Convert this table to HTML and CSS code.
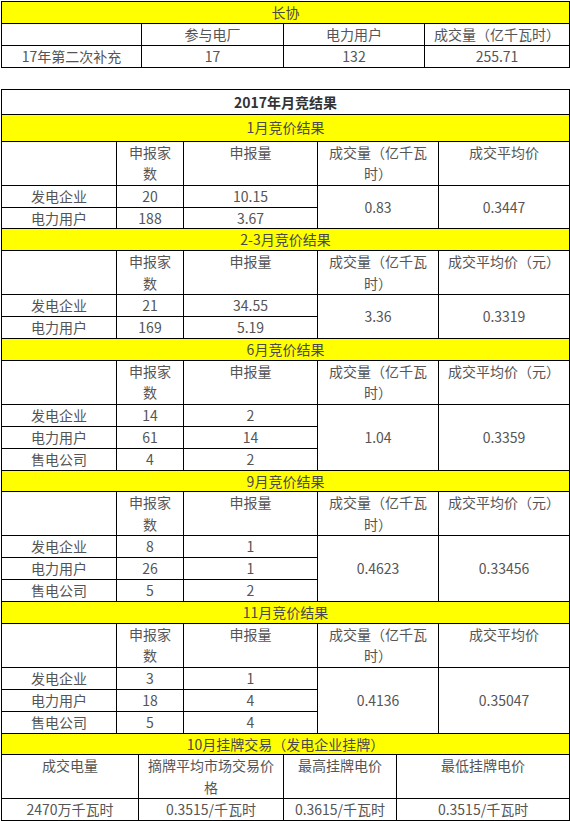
FILE: index.html
```html
<!DOCTYPE html>
<html lang="zh-CN">
<head>
<meta charset="utf-8">
<title>长协与月竞结果</title>
<link rel="stylesheet" href="styles.css">
</head>
<body>
<div class="page">
  <table class="grid t1">
    <colgroup><col class="c1a"><col class="c1b"><col class="c1c"><col class="c1d"></colgroup>
    <tr class="yl"><td colspan="4">长协</td></tr>
    <tr><td></td><td>参与电厂</td><td>电力用户</td><td>成交量（亿千瓦时）</td></tr>
    <tr><td>17年第二次补充</td><td>17</td><td>132</td><td>255.71</td></tr>
  </table>

  <table class="grid t2">
    <colgroup><col class="c2a"><col class="c2b"><col class="c2c"><col class="c2d"><col class="c2e"></colgroup>
    <tr class="title"><td colspan="5">2017年月竞结果</td></tr>

    <tr class="yl first"><td colspan="5">1月竞价结果</td></tr>
    <tr class="hd"><td></td><td>申报家数</td><td>申报量</td><td>成交量（亿千瓦时）</td><td>成交平均价</td></tr>
    <tr><td>发电企业</td><td>20</td><td>10.15</td><td rowspan="2">0.83</td><td rowspan="2">0.3447</td></tr>
    <tr><td>电力用户</td><td>188</td><td>3.67</td></tr>

    <tr class="yl"><td colspan="5">2-3月竞价结果</td></tr>
    <tr class="hd"><td></td><td>申报家数</td><td>申报量</td><td>成交量（亿千瓦时）</td><td>成交平均价（元）</td></tr>
    <tr><td>发电企业</td><td>21</td><td>34.55</td><td rowspan="2">3.36</td><td rowspan="2">0.3319</td></tr>
    <tr><td>电力用户</td><td>169</td><td>5.19</td></tr>

    <tr class="yl"><td colspan="5">6月竞价结果</td></tr>
    <tr class="hd"><td></td><td>申报家数</td><td>申报量</td><td>成交量（亿千瓦时）</td><td>成交平均价（元）</td></tr>
    <tr><td>发电企业</td><td>14</td><td>2</td><td rowspan="3">1.04</td><td rowspan="3">0.3359</td></tr>
    <tr><td>电力用户</td><td>61</td><td>14</td></tr>
    <tr><td>售电公司</td><td>4</td><td>2</td></tr>

    <tr class="yl"><td colspan="5">9月竞价结果</td></tr>
    <tr class="hd"><td></td><td>申报家数</td><td>申报量</td><td>成交量（亿千瓦时）</td><td>成交平均价（元）</td></tr>
    <tr><td>发电企业</td><td>8</td><td>1</td><td rowspan="3">0.4623</td><td rowspan="3">0.33456</td></tr>
    <tr><td>电力用户</td><td>26</td><td>1</td></tr>
    <tr><td>售电公司</td><td>5</td><td>2</td></tr>

    <tr class="yl"><td colspan="5">11月竞价结果</td></tr>
    <tr class="hd"><td></td><td>申报家数</td><td>申报量</td><td>成交量（亿千瓦时）</td><td>成交平均价</td></tr>
    <tr><td>发电企业</td><td>3</td><td>1</td><td rowspan="3">0.4136</td><td rowspan="3">0.35047</td></tr>
    <tr><td>电力用户</td><td>18</td><td>4</td></tr>
    <tr><td>售电公司</td><td>5</td><td>4</td></tr>
  </table>

  <table class="grid t3">
    <colgroup><col class="c3a"><col class="c3b"><col class="c3c"><col class="c3d"></colgroup>
    <tr class="yl"><td colspan="4">10月挂牌交易（发电企业挂牌）</td></tr>
    <tr class="hd"><td>成交电量</td><td>摘牌平均市场交易价格</td><td>最高挂牌电价</td><td>最低挂牌电价</td></tr>
    <tr><td>2470万千瓦时</td><td>0.3515/千瓦时</td><td>0.3615/千瓦时</td><td>0.3515/千瓦时</td></tr>
  </table>
</div>
</body>
</html>
```

FILE: styles.css
```css
html, body {
  margin: 0;
  padding: 0;
  background: #ffffff;
}

.page {
  padding: 1px 0 0 1px;
  font-family: "Noto Sans CJK SC", "Noto Sans", sans-serif;
  font-size: 14px;
  color: #555555;
}

.grid {
  border-collapse: collapse;
  table-layout: fixed;
  width: 568px;
}

.grid td {
  border: 1px solid #000000;
  padding: 0 7px;
  height: 20.9px;
  line-height: 20.9px;
  text-align: center;
  vertical-align: middle;
  white-space: normal;
  word-break: normal;
}

.grid tr.yl td {
  background: #ffff00;
  color: #4a4a4a;
}

.grid tr.hd td {
  height: 42.9px;
  line-height: 21.4px;
  vertical-align: top;
}

.grid tr.title td {
  height: 24.5px;
  line-height: 24.5px;
  font-weight: bold;
  color: #333333;
}

.grid tr.first td {
  height: 25.5px;
  line-height: 25.5px;
}

.t1 { margin-bottom: 21px; }
.t3 { margin-top: -1px; }

.c1a { width: 140px; }
.c1b { width: 142px; }
.c1c { width: 141px; }
.c1d { width: 145px; }

.c2a { width: 115px; }
.c2b { width: 67px; }
.c2c { width: 134px; }
.c2d { width: 121px; }
.c2e { width: 131px; }

.c3a { width: 137px; }
.c3b { width: 145px; }
.c3c { width: 113px; }
.c3d { width: 173px; }
```
